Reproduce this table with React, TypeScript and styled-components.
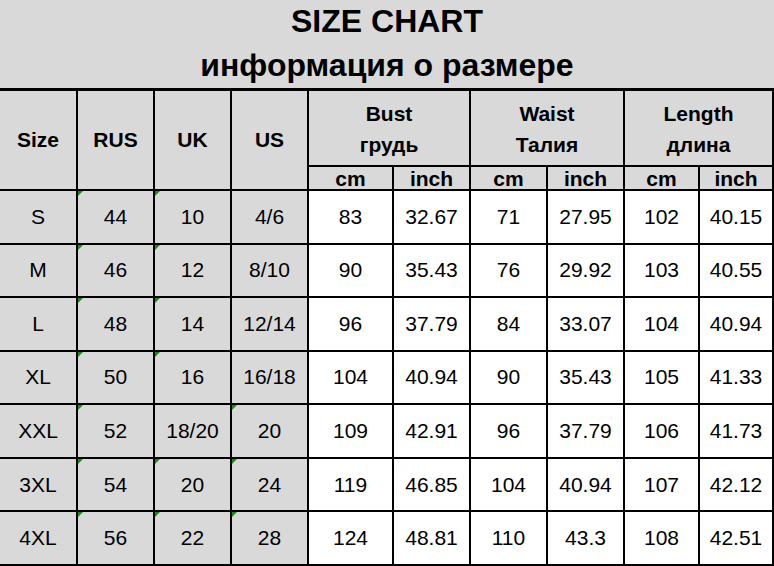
import React from "react";
import styled, { createGlobalStyle } from "styled-components";

const Global = createGlobalStyle`
  html, body { margin: 0; padding: 0; background: #d9d9d9; }
  body { font-family: "Liberation Sans", Arial, sans-serif; color: #000; }
`;

const Page = styled.div`
  width: 774px;
  height: 566px;
  background: #d9d9d9;
  display: flex;
  flex-direction: column;
  overflow: hidden;
`;

const TitleBlock = styled.header`
  height: 88px;
  display: flex;
  flex-direction: column;
  align-items: center;
  justify-content: center;
  font-weight: bold;
  font-size: 32px;
  line-height: 44px;
  padding-bottom: 2px;
  box-sizing: border-box;
`;

const TitleLine = styled.div<{ $size?: number }>`
  font-size: ${(p) => p.$size ?? 32}px;
`;

const Grid = styled.div`
  display: grid;
  grid-template-columns: 78px 77px 77px 77px 85px 77px 77px 77px 75px 74px;
  grid-template-rows: 76px 24px repeat(7, 1fr);
  flex: 1;
  border-top: 3px solid #000;
  font-size: 21px;
`;

const Cell = styled.div<{
  $white?: boolean;
  $bold?: boolean;
  $flag?: boolean;
  $rowSpan?: number;
  $colSpan?: number;
}>`
  position: relative;
  display: flex;
  align-items: center;
  justify-content: center;
  text-align: center;
  box-sizing: border-box;
  border-right: 2px solid #000;
  border-bottom: 2px solid #000;
  background: ${(p) => (p.$white ? "#ffffff" : "#d9d9d9")};
  font-weight: ${(p) => (p.$bold ? "bold" : "normal")};
  grid-row: ${(p) => (p.$rowSpan ? `span ${p.$rowSpan}` : "auto")};
  grid-column: ${(p) => (p.$colSpan ? `span ${p.$colSpan}` : "auto")};
  &::before {
    content: "";
    display: ${(p) => (p.$flag ? "block" : "none")};
    position: absolute;
    top: 0;
    left: 0;
    width: 0;
    height: 0;
    border-top: 5px solid #1a8a1a;
    border-right: 5px solid transparent;
  }
`;

const GroupHead = styled(Cell)`
  flex-direction: column;
  line-height: 31px;
  padding-top: 2px;
`;

const UnitHead = styled(Cell)`
  line-height: 22px;
  padding-top: 1px;
`;

type Row = {
  size: string;
  rus: string;
  uk: string;
  us: string;
  vals: string[];
  flags: [boolean, boolean, boolean];
};

const rows: Row[] = [
  { size: "S", rus: "44", uk: "10", us: "4/6", vals: ["83", "32.67", "71", "27.95", "102", "40.15"], flags: [true, true, false] },
  { size: "M", rus: "46", uk: "12", us: "8/10", vals: ["90", "35.43", "76", "29.92", "103", "40.55"], flags: [true, true, false] },
  { size: "L", rus: "48", uk: "14", us: "12/14", vals: ["96", "37.79", "84", "33.07", "104", "40.94"], flags: [true, true, false] },
  { size: "XL", rus: "50", uk: "16", us: "16/18", vals: ["104", "40.94", "90", "35.43", "105", "41.33"], flags: [true, true, false] },
  { size: "XXL", rus: "52", uk: "18/20", us: "20", vals: ["109", "42.91", "96", "37.79", "106", "41.73"], flags: [true, false, true] },
  { size: "3XL", rus: "54", uk: "20", us: "24", vals: ["119", "46.85", "104", "40.94", "107", "42.12"], flags: [true, true, true] },
  { size: "4XL", rus: "56", uk: "22", us: "28", vals: ["124", "48.81", "110", "43.3", "108", "42.51"], flags: [true, true, true] },
];

const groups = [
  ["Bust", "грудь"],
  ["Waist", "Талия"],
  ["Length", "длина"],
];

export default function App() {
  return (
    <>
      <Global />
      <Page>
        <TitleBlock>
          <TitleLine>SIZE CHART</TitleLine>
          <TitleLine>информация о размере</TitleLine>
        </TitleBlock>
        <Grid>
          {["Size", "RUS", "UK", "US"].map((h) => (
            <Cell key={h} $bold $rowSpan={2}>
              {h}
            </Cell>
          ))}
          {groups.map(([en, ru]) => (
            <GroupHead key={en} $bold $colSpan={2}>
              <div>{en}</div>
              <div>{ru}</div>
            </GroupHead>
          ))}
          {groups.map(([en]) => (
            <React.Fragment key={en}>
              <UnitHead $bold>cm</UnitHead>
              <UnitHead $bold>inch</UnitHead>
            </React.Fragment>
          ))}
          {rows.map((r) => (
            <React.Fragment key={r.size}>
              <Cell>{r.size}</Cell>
              <Cell $flag={r.flags[0]}>{r.rus}</Cell>
              <Cell $flag={r.flags[1]}>{r.uk}</Cell>
              <Cell $flag={r.flags[2]}>{r.us}</Cell>
              {r.vals.map((v, i) => (
                <Cell key={i} $white>
                  {v}
                </Cell>
              ))}
            </React.Fragment>
          ))}
        </Grid>
      </Page>
    </>
  );
}
